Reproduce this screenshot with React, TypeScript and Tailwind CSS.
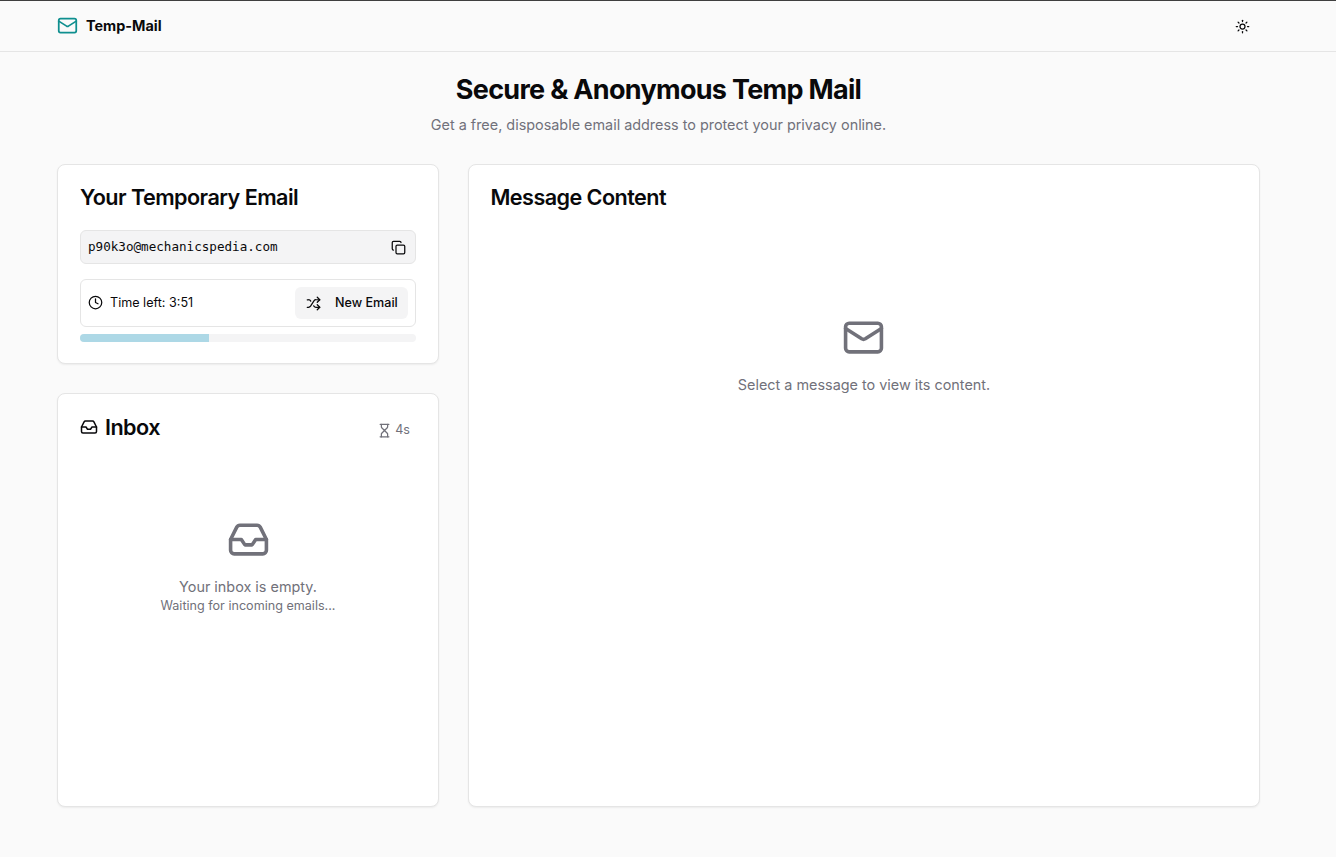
import { Mail, Sun, Copy, Clock, Shuffle, Inbox, Hourglass } from "lucide-react";

export default function App() {
  return (
    <div className="min-h-[857px] bg-[#fafafa] border-t border-t-[#3f3f3f] text-[#09090b] pr-[19px] font-['Inter',sans-serif]">
      <header className="h-[51px] border-b border-[#e5e5e5] -mr-[19px] pl-[57px] pr-[86px] flex items-center justify-between">
        <div className="flex items-center gap-[8px]">
          <Mail className="w-[21px] h-[21px] text-[#0f8f8f]" strokeWidth={2} />
          <span className="font-bold text-[14.4px]">Temp-Mail</span>
        </div>
        <Sun className="w-[15px] h-[15px]" strokeWidth={2} />
      </header>
      <main className="px-[57px] pt-[20px]">
        <div className="text-center">
          <h1 className="text-[27px] leading-[36px] font-bold tracking-[-0.7px]">Secure &amp; Anonymous Temp Mail</h1>
          <p className="mt-[7px] text-[14.4px] leading-5 text-[#71717a]">Get a free, disposable email address to protect your privacy online.</p>
        </div>
        <div className="mt-[29px] flex gap-[29px]">
          <div className="w-[382px] flex flex-col gap-[29px]">
            <section className="h-[200px] bg-white rounded-lg border border-[#e5e5e5] shadow-[0_1px_2px_rgba(0,0,0,0.06)] px-[22px] pt-[18px]">
              <h2 className="text-[21.6px] leading-[28px] font-semibold tracking-[-0.55px]">Your Temporary Email</h2>
              <div className="mt-[19px] h-[34px] bg-[#f4f4f5] border border-[#e5e5e5] rounded-md pl-[7px] pr-[9px] flex items-center justify-between">
                <span className="font-['DejaVu_Sans_Mono',monospace] text-[12.6px]">p90k3o@mechanicspedia.com</span>
                <Copy className="w-[15px] h-[15px]" />
              </div>
              <div className="mt-[15px] h-[48px] border border-[#e5e5e5] rounded-md pl-[7px] pr-[7px] flex items-center justify-between">
                <div className="flex items-center gap-[7px] text-[12.6px]">
                  <Clock className="w-[15px] h-[15px]" />
                  <span>Time left: 3:51</span>
                </div>
                <div className="h-8 w-[113px] bg-[#f4f4f5] rounded-md flex items-center pl-[11px] text-[12.6px] font-medium">
                  <Shuffle className="w-[15px] h-[15px]" />
                  <span className="ml-[14px]">New Email</span>
                </div>
              </div>
              <div className="mt-[7px] h-2 rounded-full bg-[#f4f4f5] overflow-hidden">
                <div className="h-full w-[129px] bg-[#add8e6]" />
              </div>
            </section>
            <section className="h-[414px] bg-white rounded-lg border border-[#e5e5e5] shadow-[0_1px_2px_rgba(0,0,0,0.06)] px-[22px] pt-[19px]">
              <div className="flex items-center justify-between pr-[6px]">
                <div className="flex items-center gap-[7px]">
                  <Inbox className="w-[18px] h-[18px]" />
                  <h2 className="text-[21.6px] leading-[28px] font-semibold tracking-[-0.55px]">Inbox</h2>
                </div>
                <div className="flex items-center gap-[3px] text-[12.6px] text-[#71717a] pt-[7px]">
                  <Hourglass className="w-[15px] h-[15px]" />
                  <span>4s</span>
                </div>
              </div>
              <div className="mt-[77px] flex flex-col items-center text-[#71717a]">
                <Inbox className="w-[43px] h-[43px]" />
                <p className="mt-[16px] text-[14.4px] leading-5">Your inbox is empty.</p>
                <p className="mt-px text-[12.6px] leading-4">Waiting for incoming emails...</p>
              </div>
            </section>
          </div>
          <section className="w-[792px] h-[643px] bg-white rounded-lg border border-[#e5e5e5] shadow-[0_1px_2px_rgba(0,0,0,0.06)] px-[21.5px] pt-[18px]">
            <h2 className="text-[21.6px] leading-[28px] font-semibold tracking-[-0.55px]">Message Content</h2>
            <div className="mt-[105px] flex flex-col items-center text-[#71717a]">
              <Mail className="w-[43px] h-[43px] -translate-x-px" />
              <p className="mt-[16px] text-[14.4px] leading-5">Select a message to view its content.</p>
            </div>
          </section>
        </div>
      </main>
    </div>
  );
}
